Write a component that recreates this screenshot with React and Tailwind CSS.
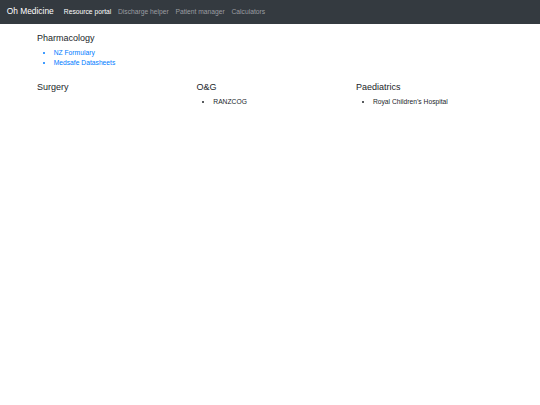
import React from "react";

const sections = [
  { title: "Surgery", links: [] },
  { title: "O&G", links: [{ label: "RANZCOG" }] },
  { title: "Paediatrics", links: [{ label: "Royal Children’s Hospital" }] },
];

const navItems = [
  { label: "Resource portal", active: true },
  { label: "Discharge helper" },
  { label: "Patient manager" },
  { label: "Calculators" },
];

const Section = ({ title, links, blue = false }) => (
  <div className="px-[6.3px]">
    <h4 className="mb-[3.36px] text-[9px] leading-[12.1px] font-normal text-[#212529]">
      {title}
    </h4>
    <ul className="mb-[6.72px] list-disc pl-[16.8px] text-[6.72px] leading-[10.08px]">
      {links.map((l) => (
        <li key={l.label} className={blue ? "text-[#007bff]" : "text-[#212529]"}>
          {blue ? <a href="#">{l.label}</a> : l.label}
        </li>
      ))}
    </ul>
  </div>
);

export default function App() {
  return (
    <div className="min-h-screen bg-white font-['Liberation_Sans',Arial,sans-serif] text-[#212529]">
      {/* Navbar */}
      <nav className="flex items-center bg-[#343a40] px-[6.72px] py-[3.36px]">
        <a
          href="#"
          className="mr-[6.72px] py-[2.1px] text-[8.4px] leading-[12.6px] text-white"
        >
          Oh Medicine
        </a>
        <ul className="flex">
          {navItems.map((item) => (
            <li key={item.label}>
              <a
                href="#"
                className={`block px-[3.36px] py-[3.36px] text-[6.72px] leading-[10.08px] ${
                  item.active ? "text-white" : "text-[#9a9da0]"
                }`}
              >
                {item.label}
              </a>
            </li>
          ))}
        </ul>
      </nav>

      {/* Content */}
      <div className="mx-auto mt-[8.6px] w-[478.8px]">
        <div className="pb-[6.72px]">
          <Section
            title="Pharmacology"
            blue
            links={[{ label: "NZ Formulary" }, { label: "Medsafe Datasheets" }]}
          />
        </div>
        <div className="grid grid-cols-3">
          {sections.map((s) => (
            <Section key={s.title} title={s.title} links={s.links} />
          ))}
        </div>
      </div>
    </div>
  );
}
